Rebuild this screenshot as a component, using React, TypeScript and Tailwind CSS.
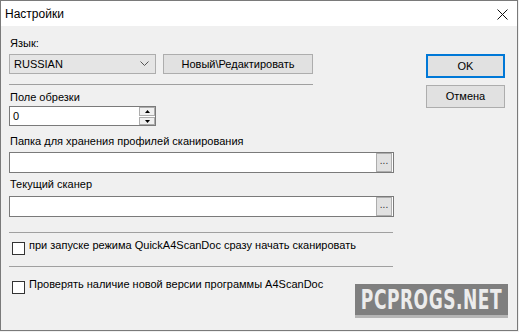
import React from "react";

const Label = ({ children, mt }: { children: React.ReactNode; mt: string }) => (
  <div className={`${mt} h-[13px] leading-[13px] pl-[1px] text-[11px] text-black whitespace-nowrap`}>{children}</div>
);

const BrowseInput = ({ mt }: { mt: string }) => (
  <div className={`${mt} h-[21px] w-[385px] bg-white border border-[#7a7a7a] flex justify-end items-start pt-[0px] pr-[1px]`}>
    <div className="mt-[0px] w-[16px] h-[19px] bg-[#e1e1e1] border border-[#adadad] flex items-center justify-center text-[10px] leading-none text-[#333] pb-[3px]">
      ...
    </div>
  </div>
);

const Checkbox = ({ mt, label }: { mt: string; label: string }) => (
  <div className={`${mt} flex items-start h-[16px] pl-[3px]`}>
    <div className="mt-[3px] w-[13px] h-[13px] bg-white border border-[#333]" />
    <div className="ml-[4px] h-[13px] leading-[13px] text-[11px] text-black whitespace-nowrap">{label}</div>
  </div>
);

export default function App() {
  return (
    <div
      className="relative w-[519px] h-[332px] bg-[#f0f0f0] overflow-hidden"
      style={{ fontFamily: '"Liberation Sans", Arial, sans-serif' }}
    >
      <div className="w-[518px] h-[331px] border border-[#7a7a7a] flex flex-col">
        <div className="h-[25px] bg-white flex items-center justify-between pl-[4px] pr-[9px]">
          <span className="text-[12px] text-black leading-none">Настройки</span>
          <svg width="11" height="11" viewBox="0 0 11 11" className="mt-[2px]">
            <path d="M0.5 0.5 L10.5 10.5 M10.5 0.5 L0.5 10.5" stroke="#111" strokeWidth="1" />
          </svg>
        </div>
        <div className="flex-1 flex pl-[8px] pt-[11px]">
          <div className="w-[385px] flex flex-col">
            <Label mt="mt-0">Язык:</Label>
            <div className="mt-[4px] flex">
              <div className="w-[147px] h-[20px] bg-[#e5e5e5] border border-[#adadad] flex items-center justify-between pl-[4px] pr-[6px]">
                <span className="text-[11px] leading-none">RUSSIAN</span>
                <svg width="9" height="6" viewBox="0 0 9 6">
                  <path d="M0.5 0.5 L4.5 4.5 L8.5 0.5" stroke="#555" strokeWidth="1" fill="none" />
                </svg>
              </div>
              <div className="ml-[7px] w-[150px] h-[20px] bg-[#e1e1e1] border border-[#adadad] flex items-center justify-center text-[11px] leading-none">
                Новый\Редактировать
              </div>
            </div>
            <div className="mt-[10px] w-[304px] h-[1px] bg-[#a0a0a0]" />
            <Label mt="mt-[6px]">Поле обрезки</Label>
            <div className="mt-[2px] w-[147px] h-[20px] bg-white border border-[#7a7a7a] flex justify-between">
              <span className="pl-[3px] text-[11px] leading-[18px]">0</span>
              <div className="flex flex-col gap-[1px] pt-[0px] pr-[0px] w-[16px]">
                <div className="h-[9px] bg-[#f0f0f0] border border-[#adadad] flex items-center justify-center">
                  <svg width="5" height="3" viewBox="0 0 5 3"><path d="M2.5 0 L5 3 L0 3 Z" fill="#000" /></svg>
                </div>
                <div className="h-[8px] bg-[#f0f0f0] border border-[#adadad] flex items-center justify-center">
                  <svg width="5" height="3" viewBox="0 0 5 3"><path d="M0 0 L5 0 L2.5 3 Z" fill="#000" /></svg>
                </div>
              </div>
            </div>
            <Label mt="mt-[9px]">Папка для хранения профилей сканирования</Label>
            <BrowseInput mt="mt-[4px]" />
            <Label mt="mt-[5px]">Текущий сканер</Label>
            <BrowseInput mt="mt-[5px]" />
            <div className="mt-[15px] w-[384px] h-[1px] bg-[#a0a0a0]" />
            <Checkbox mt="mt-[6px]" label="при запуске режима QuickA4ScanDoc сразу начать сканировать" />
            <div className="mt-[11px] w-[384px] h-[1px] bg-[#a0a0a0]" />
            <Checkbox mt="mt-[11px]" label="Проверять наличие новой версии программы A4ScanDoc" />
          </div>
          <div className="ml-[32px] flex flex-col">
            <div className="mt-[17px] w-[79px] h-[24px] bg-[#e1e1e1] border-2 border-[#0078d7] flex items-center justify-center text-[11px] leading-none">
              OK
            </div>
            <div className="mt-[7px] w-[79px] h-[23px] bg-[#e1e1e1] border border-[#adadad] flex items-center justify-center text-[11px] leading-none">
              Отмена
            </div>
          </div>
        </div>
      </div>
      <div className="absolute left-[355px] top-[284px] w-[153px] h-[34px] bg-[#b5b5b5]">
        <div className="h-[31px] bg-[#7f7f7f] flex items-center justify-center">
          <span
            className="inline-block scale-y-[1.4] text-[#ececec] text-[19px] font-bold tracking-[0.5px] leading-none whitespace-nowrap"
            style={{ fontFamily: '"DejaVu Sans Condensed", "DejaVu Sans", sans-serif', fontStretch: "condensed" }}
          >
            PCPROGS.NET
          </span>
        </div>
      </div>
    </div>
  );
}
